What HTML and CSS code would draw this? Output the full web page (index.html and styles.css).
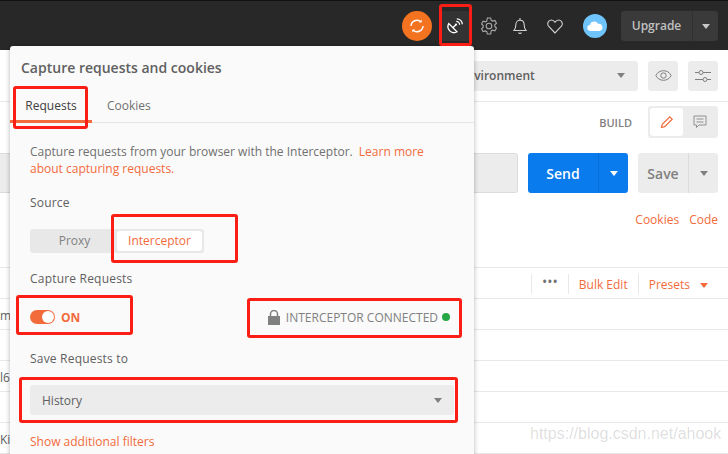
FILE: index.html
```html
<!DOCTYPE html>
<html lang="en">
<head>
    <meta charset="UTF-8">
    <meta name="viewport" content="width=device-width, initial-scale=1.0">
    <title>Capture requests and cookies</title>
    <link rel="stylesheet" href="styles.css">
</head>
<body>
  <header class="topbar">
    <div class="sync-btn">
      <svg width="16" height="16" viewBox="0 0 16 16" fill="none" stroke="#fff" stroke-width="1.4">
        <path d="M2 8a6 6 0 0 1 10-4.2"/>
        <path d="M14 8a6 6 0 0 1-10 4.2"/>
        <path d="M12.600 1.600v2.800H9.900z" fill="#fff" stroke="none"/>
        <path d="M3.400 14.400v-2.800h2.700z" fill="#fff" stroke="none"/>
      </svg>
    </div>
    <div class="satellite-btn">
      <svg width="16" height="16" viewBox="0 0 16 16" fill="none" stroke="#fff" stroke-width="1.300">
        <path d="M1.800 5.600a6 6 0 0 0 8.200 8.200z"/>
        <path d="M5.900 9.700l2.900-2.900"/>
        <circle cx="9" cy="6.600" r="1.100" fill="#fff" stroke="none"/>
        <path d="M9.300 3.400a3.300 3.300 0 0 1 3.300 3.300"/>
        <path d="M9.800.8a5.500 5.500 0 0 1 5.500 5.500"/>
      </svg>
    </div>
    <svg class="top-icon icon-gear" width="16" height="18" viewBox="0 0 16 18" fill="none" stroke="#a8a8a8" stroke-width="1.100">
      <path d="M6.300 1h3.400l.5 2.300 1.400.8 2.300-.7 1.600 2.800-1.700 1.600v1.600l1.700 1.600-1.600 2.800-2.300-.7-1.400.8L9.700 17H6.300l-.5-2.300-1.400-.8-2.300.7L.5 11.800l1.700-1.600V8.600L.5 7l1.600-2.800 2.300.7 1.400-.8z"/>
      <circle cx="8" cy="9" r="2.800"/>
    </svg>
    <svg class="top-icon icon-bell" width="14" height="18" viewBox="0 0 14 18" fill="none" stroke="#d0d0d0" stroke-width="1.100">
      <path d="M1 13.500c1.500-1.500 1.800-3 1.800-5.500 0-2.800 1.800-4.700 4.200-4.700s4.200 1.900 4.200 4.700c0 2.500.3 4 1.800 5.500z"/>
      <path d="M7 1v2.200M5.500 15.500a1.600 1.600 0 0 0 3 0"/>
    </svg>
    <svg class="top-icon icon-heart" width="16" height="15" viewBox="0 0 16 15" fill="none" stroke="#d0d0d0" stroke-width="1.100">
      <path d="M8 14L1.800 7.500C-.4 5 1.200 1 4.300 1 6 1 7.200 2 8 3.300 8.800 2 10 1 11.700 1c3.100 0 4.700 4 2.500 6.500z"/>
    </svg>
    <div class="cloud-avatar">
      <svg width="16" height="10" viewBox="0 0 16 10" fill="#fff">
        <path d="M3.500 10a3 3 0 0 1-.4-6A4.200 4.200 0 0 1 11 2.800 3.600 3.600 0 0 1 12.500 10z"/>
      </svg>
    </div>
    <div class="upgrade-btn">
      <span class="upgrade-label">Upgrade</span>
      <span class="upgrade-caret"><i class="caret caret-light"></i></span>
    </div>
  </header>

  <div class="env-row">
    <div class="env-select">
      <span>No Environment</span>
      <i class="caret"></i>
    </div>
    <div class="icon-btn">
      <svg width="17" height="11" viewBox="0 0 17 11" fill="none" stroke="#808080" stroke-width="1">
        <path d="M.8 5.500C2.500 2.300 5.200.7 8.500.7s6 1.600 7.700 4.800c-1.700 3.200-4.400 4.800-7.700 4.800S2.500 8.700.8 5.500z"/>
        <circle cx="8.500" cy="5.500" r="2.700"/>
      </svg>
    </div>
    <div class="icon-btn">
      <svg width="16" height="14" viewBox="0 0 16 14" fill="none" stroke="#808080" stroke-width="1">
        <path d="M0 3.500h4M8 3.500h8M0 10.500h8M12 10.500h4"/>
        <circle cx="6" cy="3.500" r="2"/>
        <circle cx="10" cy="10.500" r="2"/>
      </svg>
    </div>
  </div>

  <main class="builder">
    <div class="build-row">
      <span class="build-label">BUILD</span>
      <div class="mode-toggle">
        <span class="mode-active">
          <svg width="14" height="14" viewBox="0 0 14 14" fill="none" stroke="#f26b3a" stroke-width="1.200">
            <path d="M1.500 12.500l.8-3.200 7.500-7.500 2.400 2.400-7.500 7.500z"/>
          </svg>
        </span>
        <span class="mode-idle">
          <svg width="14" height="14" viewBox="0 0 14 14" fill="none" stroke="#909090" stroke-width="1">
            <path d="M1 1h12v9H6l-2.500 2.500V10H1zM3.500 4h7M3.500 7h7"/>
          </svg>
        </span>
      </div>
    </div>

    <div class="url-row">
      <div class="url-input"></div>
      <div class="send-btn">
        <span class="send-label">Send</span>
        <span class="send-caret"><i class="caret caret-white"></i></span>
      </div>
      <div class="save-btn">
        <span class="save-label">Save</span>
        <span class="save-caret"><i class="caret"></i></span>
      </div>
    </div>

    <div class="link-row">
      <a class="link">Cookies</a>
      <a class="link">Code</a>
    </div>

    <div class="table-head">
      <span class="dots">•••</span>
      <a class="link head-cell">Bulk Edit</a>
      <a class="link head-cell">Presets<i class="caret caret-orange"></i></a>
    </div>
    <div class="table-row">m</div>
    <div class="table-row"></div>
    <div class="table-row">l6l</div>
    <div class="table-row"></div>
    <div class="table-row">Kit</div>
  </main>

  <section class="popover">
    <h2 class="popover-title">Capture requests and cookies</h2>
    <div class="tabs">
      <span class="tab tab-active">Requests</span>
      <span class="tab">Cookies</span>
    </div>
    <div class="popover-body">
      <div class="desc">
        <p>Capture requests from your browser with the Interceptor. <a class="link learn-more">Learn more</a></p>
        <p><a class="link">about capturing requests.</a></p>
      </div>
      <p class="section-label label-source">Source</p>
      <div class="segmented">
        <span class="seg">Proxy</span>
        <span class="seg seg-active">Interceptor</span>
      </div>
      <p class="section-label label-capture">Capture Requests</p>
      <div class="capture-row">
        <div class="switch-wrap">
          <span class="switch"><i class="knob"></i></span>
          <span class="switch-text">ON</span>
        </div>
        <div class="status">
          <svg width="12" height="15" viewBox="0 0 12 15" fill="#808080">
            <path d="M0 6h12v9H0z"/>
            <path d="M2.500 6V4a3.500 3.500 0 0 1 7 0v2" fill="none" stroke="#808080" stroke-width="1.500"/>
          </svg>
          <span class="status-text">INTERCEPTOR CONNECTED</span>
          <i class="status-dot"></i>
        </div>
      </div>
      <p class="section-label label-save">Save Requests to</p>
      <div class="history-select">
        <span>History</span>
        <i class="caret"></i>
      </div>
      <a class="link filters">Show additional filters</a>
    </div>
  </section>

  <div class="mark mark-icon"></div>
  <div class="mark mark-tab"></div>
  <div class="mark mark-source"></div>
  <div class="mark mark-on"></div>
  <div class="mark mark-status"></div>
  <div class="mark mark-history"></div>

  <div class="watermark">https://blog.csdn.net/ahook</div>
</body>
</html>
```

FILE: styles.css
```css
* {
  margin: 0;
  padding: 0;
  box-sizing: border-box;
  font-family: 'Open Sans', 'Liberation Sans', sans-serif;
}

body {
  position: relative;
  width: 728px;
  height: 454px;
  overflow: hidden;
  background-color: #fff;
  color: #505050;
  font-size: 12px;
}

.link {
  color: #f26b3a;
  text-decoration: none;
}

.caret {
  display: inline-block;
  width: 0;
  height: 0;
  border-left: 4px solid transparent;
  border-right: 4px solid transparent;
  border-top: 5px solid #808080;
}

.caret-light {
  border-top-color: #c8c8c8;
}

.caret-white {
  border-top-color: #fff;
}

.caret-orange {
  border-top-color: #f26b3a;
  margin-left: 10px;
  vertical-align: 1px;
}

/* top bar */
.topbar {
  display: flex;
  align-items: center;
  height: 50px;
  padding: 1px 10px 0 402px;
  background-color: #282828;
  border-top: 1px solid #111;
}

.sync-btn {
  display: flex;
  align-items: center;
  justify-content: center;
  width: 30px;
  height: 30px;
  border-radius: 50%;
  background-color: #f47321;
}

.satellite-btn {
  display: flex;
  align-items: center;
  justify-content: center;
  width: 30px;
  height: 30px;
  margin-left: 8px;
  border-radius: 3px;
  background-color: #333;
}

.icon-gear {
  margin-left: 11px;
}

.icon-bell {
  margin-left: 16px;
}

.icon-heart {
  margin-left: 20px;
}

.cloud-avatar {
  display: flex;
  align-items: center;
  justify-content: center;
  width: 24px;
  height: 24px;
  margin-left: 20px;
  border-radius: 50%;
  background-color: #6fc4fb;
}

.upgrade-btn {
  display: flex;
  align-items: center;
  width: 97px;
  height: 30px;
  margin-left: 14px;
  border-radius: 3px;
  background-color: #3a3a3a;
  color: #c0c0c0;
  font-weight: 600;
}

.upgrade-label {
  flex: 1;
  text-align: center;
  line-height: 30px;
}

.upgrade-caret {
  display: flex;
  align-items: center;
  justify-content: center;
  width: 26px;
  height: 30px;
  border-left: 1px solid #303030;
}

/* environment row */
.env-row {
  display: flex;
  align-items: center;
  gap: 10px;
  height: 52px;
  padding: 0 10px 0 440px;
  border-bottom: 1px solid #e8e8e8;
}

.env-select {
  display: flex;
  align-items: center;
  justify-content: space-between;
  width: 198px;
  height: 30px;
  padding: 0 13px 0 0;
  border-radius: 3px;
  background-color: #ececec;
  color: #606060;
  font-size: 12px;
  font-weight: 600;
  white-space: nowrap;
}

.icon-btn {
  display: flex;
  align-items: center;
  justify-content: center;
  width: 30px;
  height: 30px;
  border-radius: 3px;
  background-color: #ececec;
}

/* builder */
.build-row {
  display: flex;
  align-items: center;
  justify-content: flex-end;
  height: 37px;
  padding: 3px 10px 0 0;
}

.build-label {
  margin-right: 16px;
  color: #808080;
  font-size: 11px;
  font-weight: 600;
}

.mode-toggle {
  display: flex;
  width: 70px;
  height: 32px;
  padding: 2px;
  border-radius: 3px;
  background-color: #ececec;
}

.mode-active,
.mode-idle {
  display: flex;
  align-items: center;
  justify-content: center;
  width: 33px;
}

.mode-active {
  border-radius: 3px;
  background-color: #fff;
}

.url-row {
  display: flex;
  height: 40px;
  margin-top: 14px;
  padding-right: 10px;
}

.url-input {
  width: 518px;
  border: 1px solid #dcdcdc;
  border-left: none;
  border-radius: 0 3px 3px 0;
  background-color: #ececec;
}

.send-btn {
  display: flex;
  width: 100px;
  margin-left: 10px;
  border-radius: 3px;
  background-color: #097bed;
  color: #fff;
  font-size: 14px;
  font-weight: 600;
}

.send-label {
  flex: 1;
  text-align: center;
  line-height: 41px;
}

.send-caret {
  display: flex;
  align-items: center;
  justify-content: center;
  width: 30px;
  border-left: 1px solid #0a6fd4;
}

.save-btn {
  display: flex;
  width: 80px;
  margin-left: 10px;
  border-radius: 3px;
  background-color: #ececec;
  color: #808080;
  font-size: 14px;
  font-weight: 600;
}

.save-label {
  flex: 1;
  text-align: center;
  line-height: 41px;
}

.save-caret {
  display: flex;
  align-items: center;
  justify-content: center;
  width: 30px;
  border-left: 1px solid #dcdcdc;
}

.link-row {
  display: flex;
  justify-content: flex-end;
  gap: 10px;
  height: 75px;
  padding: 18px 10px 0 0;
  border-bottom: 1px solid #e8e8e8;
}

.table-head {
  display: flex;
  align-items: center;
  justify-content: flex-end;
  height: 31px;
  padding: 1px 20px 0 0;
  border-bottom: 1px solid #e8e8e8;
}

.dots {
  width: 37px;
  height: 20px;
  border-left: 1px solid #e8e8e8;
  color: #707070;
  font-size: 14px;
  line-height: 15px;
  text-align: center;
}

.head-cell {
  height: 20px;
  padding: 0 10px;
  border-left: 1px solid #e8e8e8;
  line-height: 22px;
}

.table-head .head-cell:last-child {
  padding-right: 0;
}

.table-row {
  height: 31px;
  border-bottom: 1px solid #e8e8e8;
  color: #606060;
  line-height: 33px;
  white-space: nowrap;
}

/* popover */
.popover {
  position: absolute;
  top: 46px;
  left: 10px;
  width: 464px;
  height: 420px;
  border-radius: 3px 3px 0 0;
  background-color: #fafafa;
  box-shadow: 0 0 5px rgba(0, 0, 0, 0.3);
}

.popover-title {
  height: 44px;
  padding: 11px 11px 0;
  color: #606060;
  font-size: 14px;
  font-weight: 600;
  line-height: 22px;
}

.tabs {
  display: flex;
  height: 33px;
  border-bottom: 1px solid #e4e4e4;
}

.tab {
  padding: 0 15px;
  color: #707070;
  line-height: 32px;
}

.tab-active {
  width: 82px;
  height: 33px;
  border-bottom: 3px solid #f26b3a;
  color: #404040;
  text-align: center;
}

.popover-body {
  padding: 20px 20px 0;
}

.desc {
  color: #707070;
  line-height: 17px;
}

.learn-more {
  margin-left: 3px;
}

.section-label {
  color: #606060;
  font-weight: 500;
  font-size: 12px;
  line-height: 18px;
  letter-spacing: 0.2px;
}

.label-source {
  margin-top: 17px;
}

.segmented {
  display: flex;
  width: 174px;
  height: 24px;
  margin-top: 17px;
  padding: 2px;
  border-radius: 3px;
  background-color: #e8e8e8;
}

.seg {
  flex: 1;
  color: #808080;
  line-height: 20px;
  text-align: center;
}

.seg-active {
  flex: none;
  width: 85px;
  border-radius: 3px;
  background-color: #fff;
  color: #f26b3a;
}

.label-capture {
  margin-top: 17px;
}

.capture-row {
  display: flex;
  align-items: center;
  justify-content: space-between;
  height: 30px;
  margin-top: 14px;
  padding-right: 4px;
}

.switch-wrap {
  display: flex;
  align-items: center;
  gap: 6px;
}

.switch {
  display: flex;
  align-items: center;
  justify-content: flex-end;
  width: 25px;
  height: 14px;
  padding: 1px;
  border-radius: 7px;
  background-color: #f26b3a;
}

.knob {
  width: 12px;
  height: 12px;
  border-radius: 50%;
  background-color: #fff;
}

.switch-text {
  color: #f26b3a;
  font-weight: 700;
}

.status {
  display: flex;
  align-items: center;
  color: #808080;
}

.status-text {
  margin-left: 6px;
  font-size: 12px;
}

.status-dot {
  width: 8px;
  height: 8px;
  margin-left: 4px;
  border-radius: 50%;
  background-color: #26a745;
}

.label-save {
  margin-top: 18px;
}

.history-select {
  display: flex;
  align-items: center;
  justify-content: space-between;
  width: 424px;
  height: 30px;
  margin-top: 17px;
  padding: 0 12px;
  border-radius: 3px;
  background-color: #ececec;
  color: #606060;
}

.filters {
  display: block;
  margin-top: 18px;
  line-height: 18px;
}

/* red annotation boxes drawn over the screenshot */
.mark {
  position: absolute;
  border: 3px solid #fa1e14;
  border-radius: 3px;
}

.mark-icon {
  top: 4px;
  left: 439px;
  width: 33px;
  height: 42px;
}

.mark-tab {
  top: 86px;
  left: 13px;
  width: 75px;
  height: 43px;
}

.mark-source {
  top: 214px;
  left: 111px;
  width: 127px;
  height: 49px;
}

.mark-on {
  top: 295px;
  left: 16px;
  width: 117px;
  height: 40px;
}

.mark-status {
  top: 298px;
  left: 247px;
  width: 215px;
  height: 40px;
}

.mark-history {
  top: 377px;
  left: 19px;
  width: 439px;
  height: 46px;
}

.watermark {
  position: absolute;
  top: 425px;
  left: 530px;
  color: rgba(0, 0, 0, 0.14);
  font-family: 'Liberation Sans', sans-serif;
  font-size: 16px;
  white-space: nowrap;
}
```
